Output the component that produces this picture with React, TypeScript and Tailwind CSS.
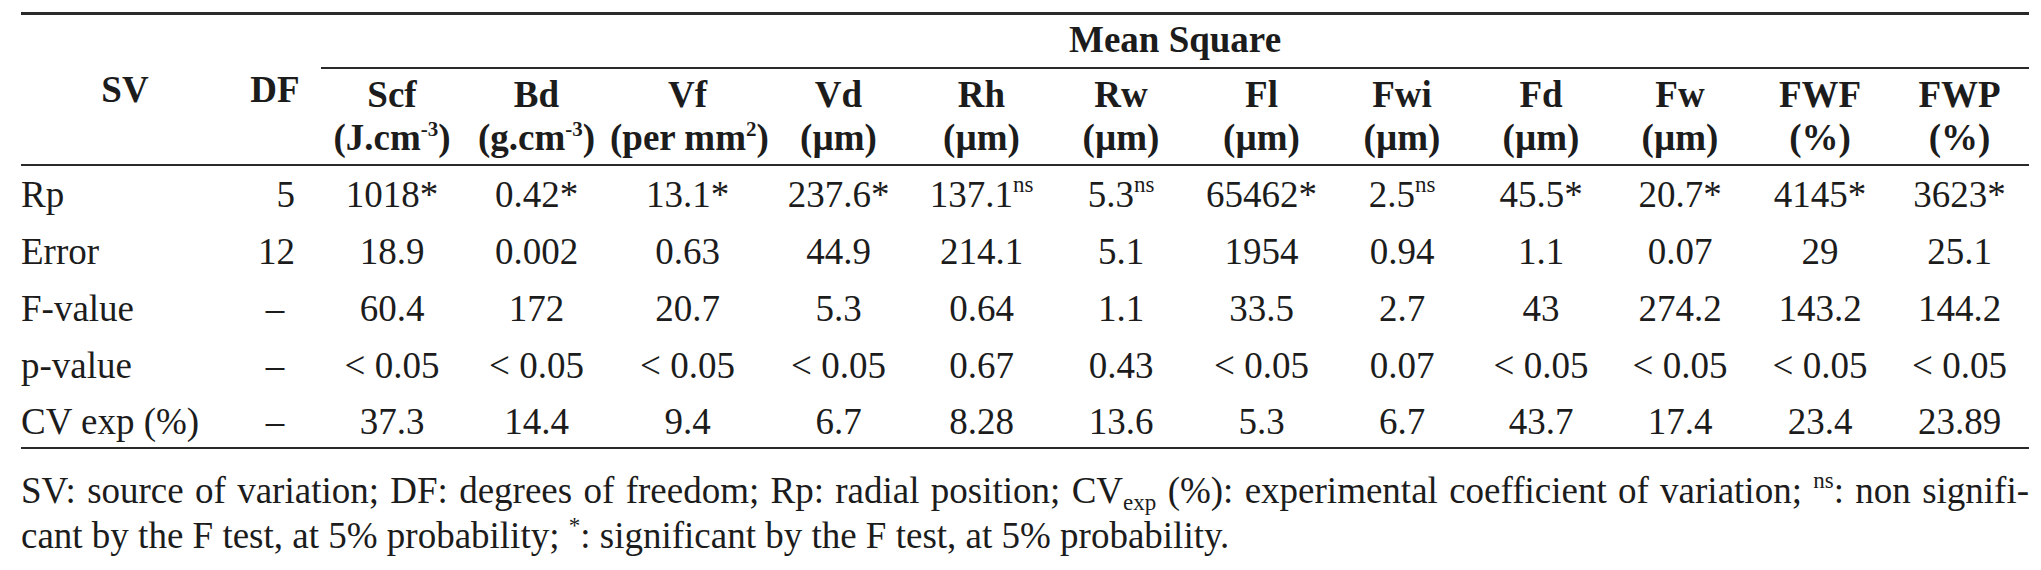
import type { ReactNode } from "react";

// superscript used in header units (J.cm-3, mm2)
function HSup({ children }: { children: ReactNode }) {
  return <span className="text-[21px] leading-none align-[14px]">{children}</span>;
}

// "ns" mark after a value
function Ns() {
  return <span className="text-[23px] leading-none align-[15px]">ns</span>;
}

const colWidths = [
  "w-[208px]",
  "w-[92px]",
  "w-[142px]",
  "w-[147px]",
  "w-[155px]",
  "w-[147px]",
  "w-[139px]",
  "w-[140px]",
  "w-[141px]",
  "w-[140px]",
  "w-[138px]",
  "w-[140px]",
  "w-[140px]",
  "w-[139px]",
];

const heads: { name: string; unit: ReactNode }[] = [
  { name: "Scf", unit: <>(J.cm<HSup>-3</HSup>)</> },
  { name: "Bd", unit: <>(g.cm<HSup>-3</HSup>)</> },
  { name: "Vf", unit: <>(per mm<HSup>2</HSup>)</> },
  { name: "Vd", unit: "(µm)" },
  { name: "Rh", unit: "(µm)" },
  { name: "Rw", unit: "(µm)" },
  { name: "Fl", unit: "(µm)" },
  { name: "Fwi", unit: "(µm)" },
  { name: "Fd", unit: "(µm)" },
  { name: "Fw", unit: "(µm)" },
  { name: "FWF", unit: "(%)" },
  { name: "FWP", unit: "(%)" },
];

const rows: { sv: string; df: string; vals: ReactNode[] }[] = [
  {
    sv: "Rp",
    df: "5",
    vals: [
      "1018*",
      "0.42*",
      "13.1*",
      "237.6*",
      <>137.1<Ns /></>,
      <>5.3<Ns /></>,
      "65462*",
      <>2.5<Ns /></>,
      "45.5*",
      "20.7*",
      "4145*",
      "3623*",
    ],
  },
  {
    sv: "Error",
    df: "12",
    vals: ["18.9", "0.002", "0.63", "44.9", "214.1", "5.1", "1954", "0.94", "1.1", "0.07", "29", "25.1"],
  },
  {
    sv: "F-value",
    df: "–",
    vals: ["60.4", "172", "20.7", "5.3", "0.64", "1.1", "33.5", "2.7", "43", "274.2", "143.2", "144.2"],
  },
  {
    sv: "p-value",
    df: "–",
    vals: ["< 0.05", "< 0.05", "< 0.05", "< 0.05", "0.67", "0.43", "< 0.05", "0.07", "< 0.05", "< 0.05", "< 0.05", "< 0.05"],
  },
  {
    sv: "CV exp (%)",
    df: "–",
    vals: ["37.3", "14.4", "9.4", "6.7", "8.28", "13.6", "5.3", "6.7", "43.7", "17.4", "23.4", "23.89"],
  },
];

export default function App() {
  return (
    <div className="min-h-[570px] bg-white pl-[21px] pt-[12px] font-['Liberation_Serif','Times_New_Roman',serif] text-[37px] text-[#1c1c1c]">
      <div className="w-[2008px] border-t-[3px] border-[#2a2a2a]">
        <table className="w-[2008px] table-fixed border-separate border-spacing-0">
          <colgroup>
            {colWidths.map((w, i) => (
              <col key={i} className={w} />
            ))}
          </colgroup>
          <thead className="font-bold">
            <tr>
              <th rowSpan={2} className="border-b-2 border-[#2a2a2a] p-0 text-center align-middle leading-[43px]">
                SV
              </th>
              <th rowSpan={2} className="border-b-2 border-[#2a2a2a] p-0 text-center align-middle leading-[43px]">
                DF
              </th>
              <th colSpan={12} className="h-[54px] border-b-2 border-[#2a2a2a] p-0 text-center align-top leading-[50px]">
                Mean Square
              </th>
            </tr>
            <tr>
              {heads.map((h) => (
                <th
                  key={h.name}
                  className="h-[97px] whitespace-nowrap border-b-2 border-[#2a2a2a] px-0 pt-[4px] pb-[5px] text-center align-top leading-[43px]"
                >
                  <div>{h.name}</div>
                  <div>{h.unit}</div>
                </th>
              ))}
            </tr>
          </thead>
          <tbody>
            {rows.map((r, ri) => {
              const last = ri === rows.length - 1;
              const cell = last
                ? "h-[53px] border-b-2 border-[#2a2a2a] p-0 pt-[2px] leading-[51px] align-top whitespace-nowrap"
                : "h-[57px] p-0 leading-[57px] align-top whitespace-nowrap";
              return (
                <tr key={r.sv}>
                  <td className={`${cell} text-left`}>{r.sv}</td>
                  <td className={`${cell} ${r.df === "–" ? "text-center" : "pr-[26px] text-right"}`}>{r.df}</td>
                  {r.vals.map((v, i) => (
                    <td key={i} className={`${cell} text-center`}>
                      {v}
                    </td>
                  ))}
                </tr>
              );
            })}
          </tbody>
        </table>
      </div>
      <div className="mt-[20px] w-[2008px] leading-[40px]">
        <p className="text-justify [text-align-last:justify]">
          SV: source of variation; DF: degrees of freedom; Rp: radial position; CV
          <span className="text-[23px] leading-none align-[-7px]">exp</span> (%): experimental coefficient of variation;{" "}
          <span className="text-[23px] leading-none align-[15px]">ns</span>: non signifi-
        </p>
        <p>
          cant by the F test, at 5% probability; <span className="text-[23px] leading-none align-[15px]">*</span>:
          significant by the F test, at 5% probability.
        </p>
      </div>
    </div>
  );
}
